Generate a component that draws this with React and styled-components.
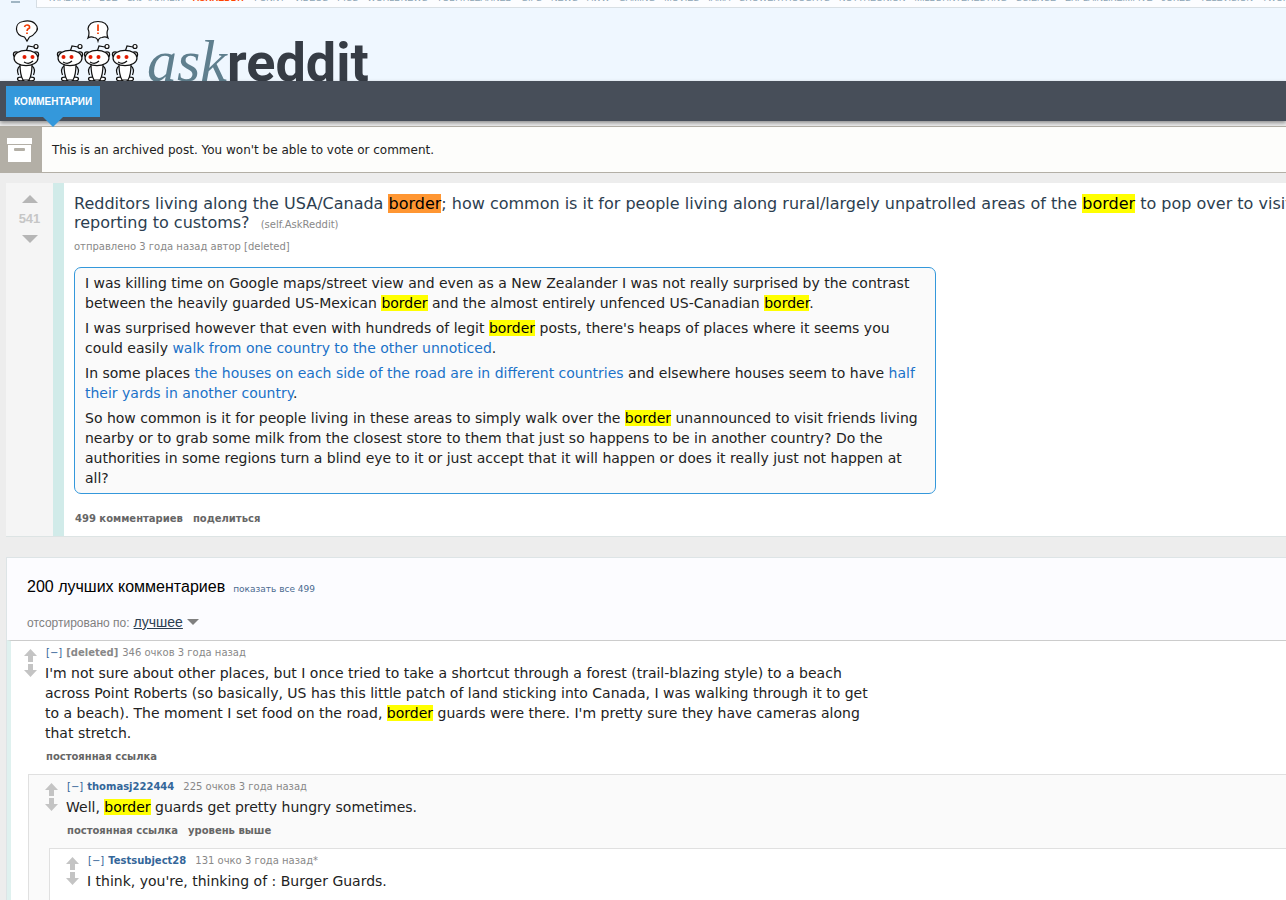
import React from 'react';
import styled, { createGlobalStyle } from 'styled-components';

const GlobalStyle = createGlobalStyle`
  * {
    box-sizing: border-box;
  }

  body {
    margin: 0;
    background: #ededed;
    font-family: "DejaVu Sans", Verdana, sans-serif;
  }

  a {
    color: inherit;
    text-decoration: none;
  }

  button {
    padding: 0;
    border: none;
    background: none;
    font: inherit;
    color: inherit;
    cursor: pointer;
  }
`;

const Page = styled.div`
  height: 100vh;
  overflow: hidden;
`;

const Header = styled.header`
  height: 81px;
  background: #eff7ff;
  display: flex;
  flex-direction: column;
  justify-content: space-between;
`;

const TopBar = styled.div`
  display: flex;
  height: 8px;
`;

const MenuButton = styled.button`
  width: 36px;
  display: flex;
  padding: 1px 0 0 11px;
`;

const MenuBar = styled.span`
  width: 9px;
  height: 2px;
  background: #a0b5c3;
`;

const TopNav = styled.nav`
  flex: 1;
  min-width: 0;
  display: flex;
  align-items: flex-end;
  gap: 9px;
  padding: 0 0 4px 12px;
  overflow: hidden;
  white-space: nowrap;
  background: #fcfdff;
  border-left: 1px solid #d5dde3;
  border-bottom: 1px solid #d8dfe4;
  font-family: "Liberation Sans", Arial, sans-serif;
  font-size: 9px;
  line-height: 10px;
`;

const TopLink = styled.a`
  color: ${props => (props.$active ? '#ff4500' : '#8ba3b3')};
  font-weight: ${props => (props.$active ? 700 : 400)};
`;

const Brand = styled.a`
  display: flex;
  align-items: flex-end;
  height: 62px;
  padding-left: 12px;
  overflow: hidden;
`;

const Wordmark = styled.span`
  display: flex;
  align-items: baseline;
  margin-left: 8px;
  line-height: 62px;
  height: 51px;
`;

const Ask = styled.span`
  font-family: "Liberation Serif", serif;
  font-style: italic;
  font-size: 60px;
  color: #5f7f8e;
`;

const Reddit = styled.span`
  font-family: Roboto, sans-serif;
  font-weight: 700;
  font-size: 54px;
  color: #363c45;
`;

const TabBar = styled.nav`
  position: relative;
  height: 40px;
  margin-bottom: 5px;
  padding: 5px 6px;
  background: #474e59;
  box-shadow: 0 2px 4px rgba(0, 0, 0, 0.4);
`;

const Tab = styled.a`
  position: relative;
  display: inline-block;
  padding: 0 8px;
  background: #3498db;
  color: #fff;
  font-family: "Liberation Sans", Arial, sans-serif;
  font-size: 10px;
  font-weight: 700;
  line-height: 31px;

  &::after {
    content: '';
    position: absolute;
    top: 100%;
    left: 50%;
    margin-left: -10px;
    border: 10px solid transparent;
    border-top-color: #3498db;
    border-bottom: none;
  }
`;

const Infobar = styled.div`
  display: flex;
  height: 47px;
  margin-bottom: 10px;
  background: #fdfdfb;
  border: 1px solid #b3afa6;
  border-width: 1px 0;
  font-size: 12px;
  line-height: 46px;
  color: #222;
`;

const InfoIcon = styled.div`
  width: 42px;
  margin-right: 10px;
  padding: 11px 7px;
  background: #b3afa6;
  line-height: 0;
`;

const Post = styled.article`
  display: flex;
  margin: 0 0 20px 6px;
  background: #fff;
  border-bottom: 1px solid #dde4e4;
`;

const Votes = styled.div`
  display: flex;
  flex-direction: column;
  align-items: center;
  gap: 10px;
  width: 47px;
  padding-top: 12px;
  background: #f5f5f5;
  color: #c6c6c6;
  font-family: "Liberation Sans", Arial, sans-serif;
  font-size: 13px;
  font-weight: 700;
  line-height: 12px;
`;

const Triangle = styled.button`
  border: 8px solid transparent;
  border-top: ${props => (props.$down ? '8px solid #b6b6b6' : 'none')};
  border-bottom: ${props => (props.$down ? 'none' : '8px solid #b6b6b6')};
`;

const Entry = styled.div`
  flex: 1;
  min-width: 0;
  padding: 11px 0 10px 10px;
  border-left: 11px solid #d1ebe9;
  overflow: hidden;
`;

const Title = styled.h1`
  margin: 0;
  font-size: 16px;
  font-weight: 400;
  line-height: 19px;
  white-space: nowrap;
  color: #2c3e50;
`;

const Mark = styled.mark`
  background: ${props => (props.$current ? '#ff9632' : '#ff0')};
  color: #000;
`;

const Domain = styled.span`
  margin-left: 6px;
  font-size: 10px;
  line-height: 10px;
  color: #888;
`;

const Tagline = styled.div`
  display: flex;
  font-size: 10px;
  line-height: 14px;
  color: #888;
`;

const PostTagline = styled(Tagline)`
  margin: 8px 0 13px;
`;

const Text = styled.div`
  max-width: 840px;
  font-size: 14px;
  line-height: 20px;
  color: #222;

  p {
    margin: 0;
  }

  p + p {
    margin-top: 5px;
  }

  a {
    color: #1b72c8;
  }
`;

const SelfText = styled(Text)`
  max-width: 862px;
  padding: 5px 10px;
  background: #fafafa;
  border: 1px solid #3498db;
  border-radius: 7px;
`;

const Actions = styled.div`
  display: flex;
  gap: 10px;
  margin: 7px 0 10px;
  padding-left: 1px;
  font-size: 10px;
  font-weight: 700;
  line-height: 14px;
  color: #666;
`;

const PostActions = styled(Actions)`
  margin: 18px 0 0;
`;

const Comments = styled.section`
  margin-left: 6px;
  border-top: 1px solid #dde4e6;
  border-left: 1px solid #dde4e6;
  background: #fcfcff;
`;

const CommentsHead = styled.div`
  height: 82px;
  padding: 19px 20px 0;
  font-family: "Liberation Sans", Arial, sans-serif;
`;

const HeadLine = styled.div`
  display: flex;
  align-items: baseline;
  gap: 8px;
`;

const Heading = styled.h2`
  margin: 0;
  font-size: 16px;
  font-weight: 400;
  line-height: 20px;
  color: #000;
`;

const ShowAll = styled.a`
  font-family: "DejaVu Sans", Verdana, sans-serif;
  font-size: 9px;
  color: #4a6a8f;
`;

const SortLine = styled.div`
  display: flex;
  align-items: baseline;
  gap: 4px;
  margin-top: 16px;
  font-size: 12px;
  line-height: 18px;
  color: #808080;
`;

const SortButton = styled.button`
  display: flex;
  align-items: center;
  gap: 4px;
  font-size: 14px;
  color: #2c3e50;
  text-decoration: underline;

  &::after {
    content: '';
    border: 6px solid transparent;
    border-top-color: #808080;
    border-bottom: none;
  }
`;

const CommentBox = styled.div`
  border-top: 1px solid ${props => (props.$depth ? '#e0e0e0' : '#ccc')};
  border-left: ${props => (props.$depth ? '1px solid #e0e0e0' : '4px solid #dff1ef')};
  margin-left: ${props => (props.$depth === 1 ? '17px' : props.$depth ? '20px' : '0')};
  background: ${props => (props.$depth === 1 ? '#fafafa' : '#fff')};
`;

const CommentRow = styled.div`
  display: flex;
  gap: 8px;
  padding: 5px 0 0 ${props => (props.$depth ? '16px' : '13px')};
`;

const Arrows = styled.div`
  display: flex;
  flex-direction: column;
  gap: 2px;
  padding-top: 3px;
  line-height: 0;
`;

const CommentBody = styled.div`
  flex: 1;
  min-width: 0;

  ${Tagline} {
    margin-bottom: 3px;
    padding-left: 1px;
  }
`;

const Expand = styled.button`
  margin-right: 4px;
  color: #369;
`;

const Author = styled.a`
  margin-right: ${props => (props.$deleted ? '4px' : '9px')};
  font-weight: 700;
  color: ${props => (props.$deleted ? '#888' : '#369')};
`;

const topLinks = [
  'ГЛАВНАЯ', 'ВСЕ', 'СЛУЧАЙНЫЙ', 'ASKREDDIT', 'FUNNY', 'VIDEOS', 'PICS', 'WORLDNEWS',
  'TODAYILEARNED', 'GIFS', 'NEWS', 'AWW', 'GAMING', 'MOVIES', 'IAMA', 'SHOWERTHOUGHTS',
  'NOTTHEONION', 'MILDLYINTERESTING', 'SCIENCE', 'EXPLAINLIKEIMFIVE', 'JOKES',
  'TELEVISION', 'TWOXCHROMOSOMES',
];

// look shifts the face: the asker looks right, the others look back at him
const Snoo = ({ x, look }) => (
  <g transform={`translate(${x} 0)`} fill="#fff" stroke="#111" strokeWidth="1.2">
    <path d="M14 33 L16 27 L22 28" fill="none" />
    <circle cx="24" cy="27.500" r="2" />
    <circle cx="4" cy="35.500" r="2.600" />
    <circle cx="24" cy="35.500" r="2.600" />
    <ellipse cx="9" cy="60" rx="3.500" ry="1.800" />
    <ellipse cx="19" cy="60" rx="3.500" ry="1.800" />
    <path d="M8 47 Q4 50 6.500 56 M20 47 Q24 50 21.500 56" fill="none" />
    <path d="M8 45 Q8 56 11 61 H17 Q20 56 20 45 Z" />
    <ellipse cx="14" cy="39" rx="12" ry="7.700" />
    <g transform={`translate(${look} 0)`}>
      <path d="M10 43 Q15 46 19 42" fill="none" />
      <circle cx="10.500" cy="38" r="2" fill="#e21b00" stroke="none" />
      <circle cx="18.500" cy="38" r="2" fill="#e21b00" stroke="none" />
    </g>
  </g>
);

const Mascots = () => (
  <svg width="127" height="62" viewBox="0 0 127 62" aria-hidden="true">
    <Snoo x={0} look={2} />
    <Snoo x={44} look={-3} />
    <Snoo x={71} look={-3} />
    <Snoo x={99} look={-3} />
    <g fill="#fff" stroke="#111" strokeWidth="1.2">
      <path d="M12.500 18 C2 16 2 4 11 2.500 C22 0 29 8 23 14 Q21 17 17.500 18 L15 22 Z" />
      <path d="M76 19 Q78 14 76 10 Q77 2.500 86 2.500 Q95 2.500 96 10 Q94 14 96 19 Q93 17 90 18.500 Q87 18.500 86 22 Q85 18.500 82 18.500 Q79 17 76 19 Z" />
    </g>
    <g fill="none" stroke="#f03a00" strokeWidth="1.700">
      <path d="M12.500 8 Q13 6 15 6 Q18 6 17.500 9 Q15 10 15 12 M15 13.500 V15" />
      <path d="M86 5.500 V12 M86 13.500 V15" />
    </g>
  </svg>
);

const ArchiveIcon = () => (
  <svg width="25" height="24" viewBox="0 0 25 24" aria-hidden="true">
    <rect width="25" height="6" fill="#fff" />
    <rect x="1" y="7" width="23" height="17" fill="#fff" />
    <rect x="7" y="10" width="11" height="3" rx="1" fill="#b3afa6" />
  </svg>
);

const Arrow = ({ down }) => (
  <button aria-label={down ? 'downvote' : 'upvote'}>
    <svg width="13" height="13" viewBox="0 0 13 13">
      <path
        d={down ? 'M4 0 H9 V6 H13 L6.500 13 L0 6 H4 Z' : 'M4 13 H9 V7 H13 L6.500 0 L0 7 H4 Z'}
        fill="#c4c4c4"
      />
    </svg>
  </button>
);

const Comment = ({ depth = 0, author, deleted, meta, parent, text, children }) => (
  <CommentBox $depth={depth}>
    <CommentRow $depth={depth}>
      <Arrows>
        <Arrow />
        <Arrow down />
      </Arrows>
      <CommentBody>
        <Tagline>
          <Expand>[−]</Expand>
          <Author href="#" $deleted={deleted}>{author}</Author>
          {meta}
        </Tagline>
        <Text>{text}</Text>
        <Actions>
          <a href="#">постоянная ссылка</a>
          {parent && <a href="#">уровень выше</a>}
        </Actions>
      </CommentBody>
    </CommentRow>
    {children}
  </CommentBox>
);

const App = () => (
  <>
    <GlobalStyle />
    <Page>
      <Header>
        <TopBar>
          <MenuButton aria-label="menu"><MenuBar /></MenuButton>
          <TopNav>
            {topLinks.map(name => (
              <TopLink key={name} href="#" $active={name === 'ASKREDDIT'}>{name}</TopLink>
            ))}
          </TopNav>
        </TopBar>
        <Brand href="#">
          <Mascots />
          <Wordmark><Ask>ask</Ask><Reddit>reddit</Reddit></Wordmark>
        </Brand>
      </Header>
      <TabBar>
        <Tab href="#">КОММЕНТАРИИ</Tab>
      </TabBar>
      <Infobar>
        <InfoIcon><ArchiveIcon /></InfoIcon>
        This is an archived post. You won't be able to vote or comment.
      </Infobar>

      <Post>
        <Votes>
          <Triangle aria-label="upvote" />
          541
          <Triangle $down aria-label="downvote" />
        </Votes>
        <Entry>
          <Title>
            Redditors living along the USA/Canada <Mark $current>border</Mark>; how common is it for
            people living along rural/largely unpatrolled areas of the <Mark>border</Mark> to pop over
            to visit friends without<br />
            reporting to customs? <Domain>(self.AskReddit)</Domain>
          </Title>
          <PostTagline>отправлено 3 года назад автор [deleted]</PostTagline>
          <SelfText>
            <p>
              I was killing time on Google maps/street view and even as a New Zealander I was not
              really surprised by the contrast between the heavily guarded
              US-Mexican <Mark>border</Mark> and the almost entirely unfenced
              US-Canadian <Mark>border</Mark>.
            </p>
            <p>
              I was surprised however that even with hundreds of legit <Mark>border</Mark> posts,
              there's heaps of places where it seems you could
              easily <a href="#">walk from one country to the other unnoticed</a>.
            </p>
            <p>
              In some places <a href="#">the houses on each side of the road are in different
              countries</a> and elsewhere houses seem to have <a href="#">half their yards in another
              country</a>.
            </p>
            <p>
              So how common is it for people living in these areas to simply walk over
              the <Mark>border</Mark> unannounced to visit friends living nearby or to grab some milk
              from the closest store to them that just so happens to be in another country? Do the
              authorities in some regions turn a blind eye to it or just accept that it will happen or
              does it really just not happen at all?
            </p>
          </SelfText>
          <PostActions>
            <a href="#">499 комментариев</a>
            <a href="#">поделиться</a>
          </PostActions>
        </Entry>
      </Post>

      <Comments>
        <CommentsHead>
          <HeadLine>
            <Heading>200 лучших комментариев</Heading>
            <ShowAll href="#">показать все 499</ShowAll>
          </HeadLine>
          <SortLine>
            отсортировано по: <SortButton>лучшее</SortButton>
          </SortLine>
        </CommentsHead>
        <Comment
          author="[deleted]"
          deleted
          meta="346 очков 3 года назад"
          text={
            <p>
              I'm not sure about other places, but I once tried to take a shortcut through a forest
              (trail-blazing style) to a beach across Point Roberts (so basically, US has this little
              patch of land sticking into Canada, I was walking through it to get to a beach). The
              moment I set food on the road, <Mark>border</Mark> guards were there. I'm pretty sure
              they have cameras along that stretch.
            </p>
          }
        >
          <Comment
            depth={1}
            author="thomasj222444"
            meta="225 очков 3 года назад"
            parent
            text={<p>Well, <Mark>border</Mark> guards get pretty hungry sometimes.</p>}
          >
            <Comment
              depth={2}
              author="Testsubject28"
              meta="131 очко 3 года назад*"
              parent
              text={<p>I think, you're, thinking of : Burger Guards.</p>}
            />
          </Comment>
        </Comment>
      </Comments>
    </Page>
  </>
);

export default App;
